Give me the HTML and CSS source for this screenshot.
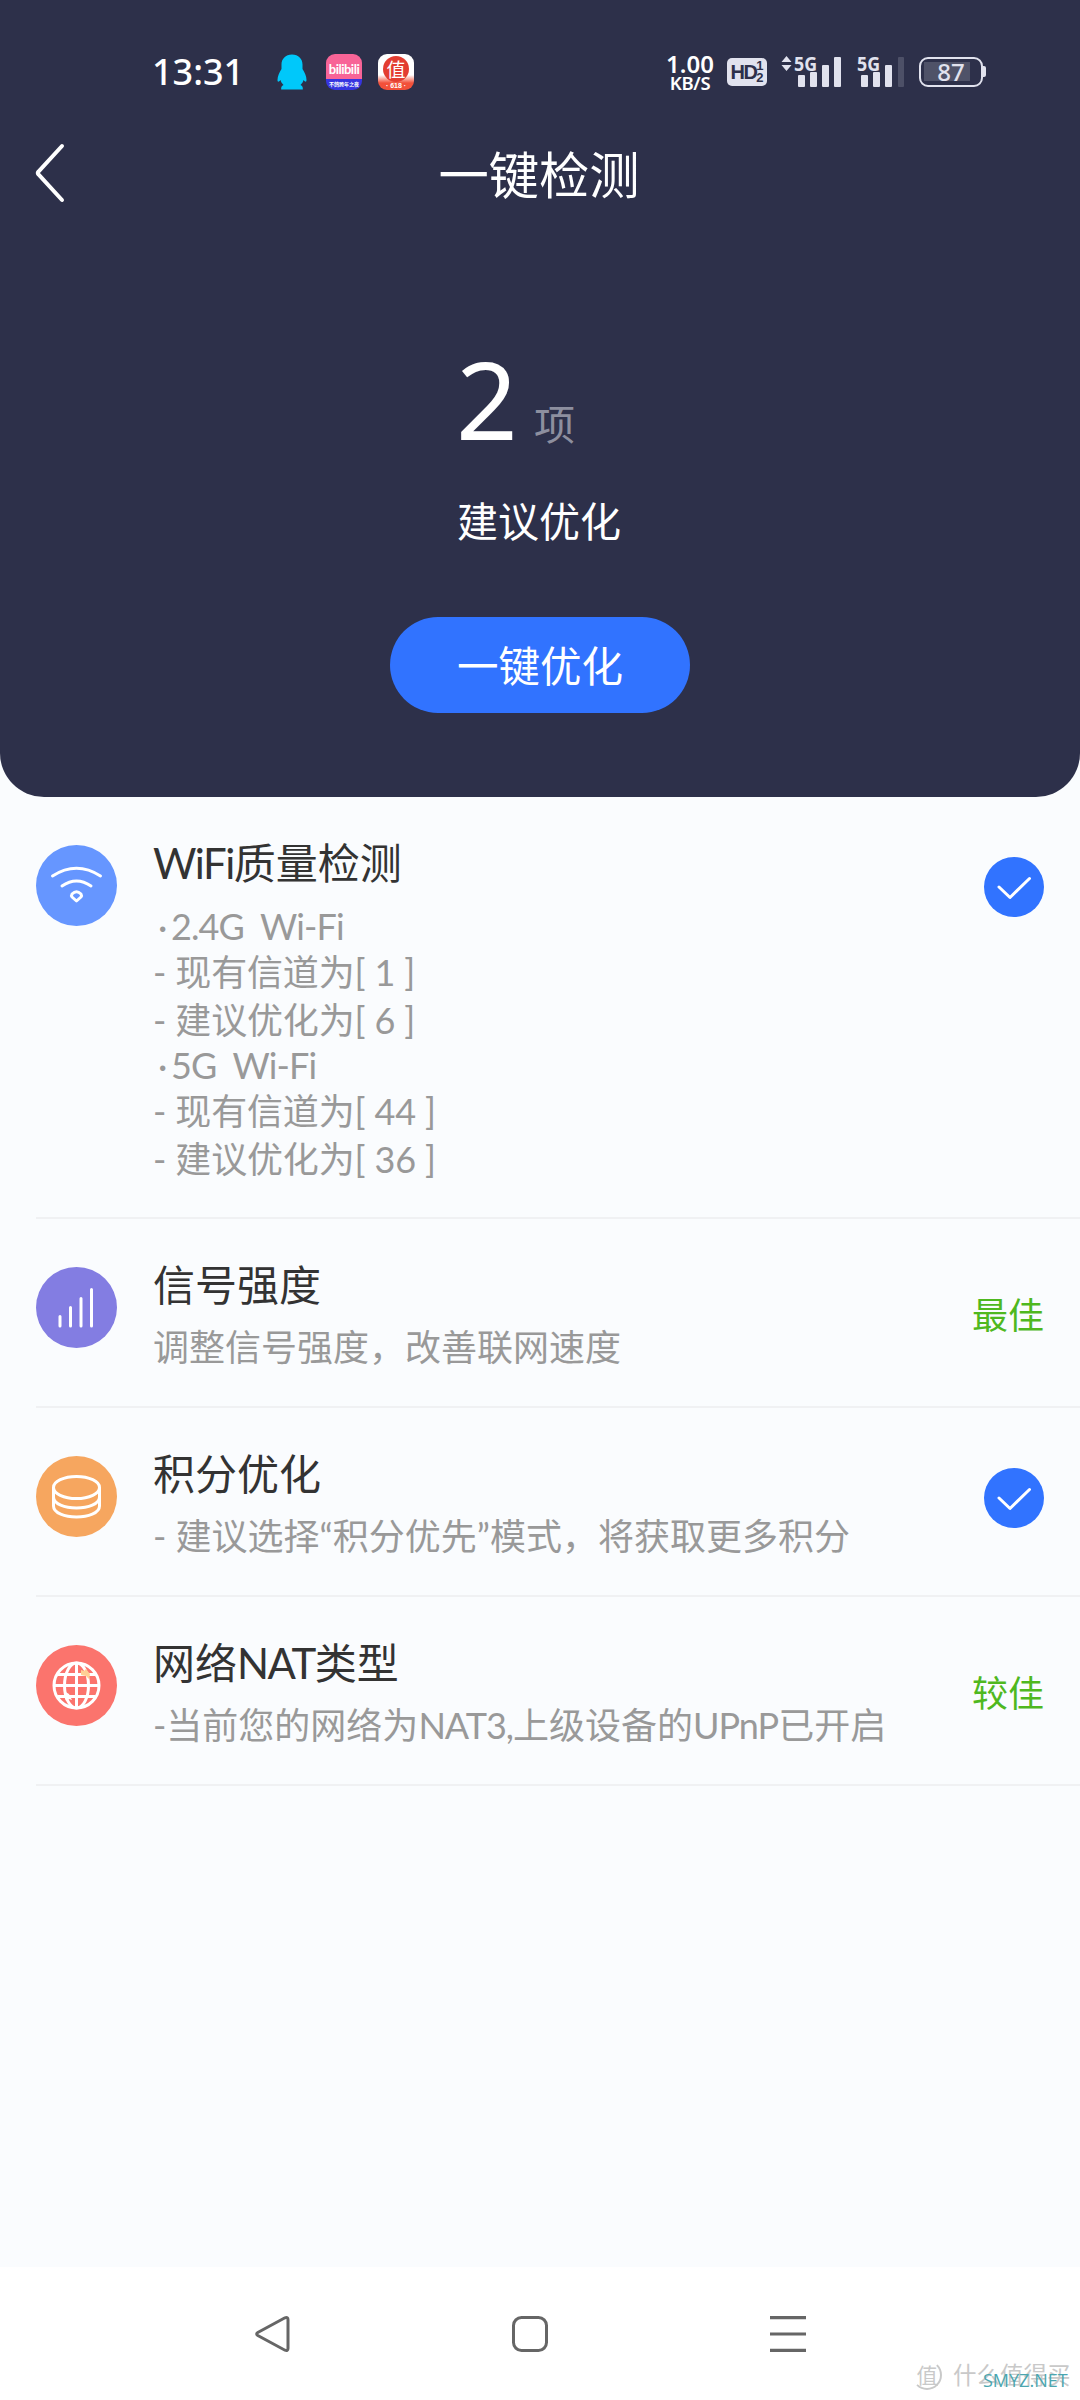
FILE: index.html
```html
<!DOCTYPE html>
<html lang="zh-CN">
<head>
<meta charset="utf-8">
<title>一键检测</title>
<link rel="stylesheet" href="styles.css">
</head>
<body>
<div class="screen">
  <header class="hero">
    <div class="status">
      <span class="clock">13:31</span>
      <svg class="qq" width="30" height="36" viewBox="0 0 30 36"><path d="M15 .5C8.500 .5 4.500 5 4.500 10.500V15C2.500 18 .5 22 .5 26c0 2 1 2.500 3 0 .5 2 1.500 3.500 3 5-2 1-2.500 2-2.300 4.500H25.800c.2-2.500-.3-3.500-2.300-4.500 1.500-1.500 2.500-3 3-5 2 2.500 3 2 3 0 0-4-2-8-4-11v-4.500C25.500 5 21.500.5 15 .5Z" fill="#00c8fa"/></svg>
      <span class="app bili"><b>bilibili</b><i>不鸽跨年之夜</i></span>
      <span class="app zhi"><b>值</b><i>· 618 ·</i></span>
      <span class="rate"><b>1.00</b><i>KB/S</i></span>
      <span class="hd"><b>HD</b><i><u>1</u><u>2</u></i></span>
      <svg class="sig1" width="62" height="42" viewBox="0 -8 62 42" fill="#e1e2ee"><path d="M6.500 1l5 6h-10zM6.500 16l5-6h-10z"/><rect x="18" y="20" width="7" height="12" rx="1"/><rect x="30" y="17" width="7" height="15" rx="1"/><rect x="42" y="10" width="7" height="22" rx="1"/><rect x="54" y="2" width="7" height="30" rx="1"/><text class="g5" x="14" y="15.500" textLength="23" lengthAdjust="spacingAndGlyphs">5G</text></svg>
      <svg class="sig2" width="48" height="42" viewBox="0 -8 48 42" fill="#e1e2ee"><rect x="4" y="20" width="7" height="12" rx="1"/><rect x="16" y="17" width="7" height="15" rx="1"/><rect x="28" y="10" width="7" height="22" rx="1"/><rect x="41" y="2" width="6" height="30" rx="1" opacity=".18"/><text class="g5" x="0" y="15.500" textLength="23" lengthAdjust="spacingAndGlyphs">5G</text></svg>
      <span class="battery">87</span>
    </div>
    <div class="titlebar">
      <svg class="back" width="32" height="60" viewBox="0 0 32 60"><path d="M28 3 4.500 28.500q-1.500 1.500 0 3L28 57" fill="none" stroke="#fff" stroke-width="4" stroke-linecap="round"/></svg>
      <h1>一键检测</h1>
    </div>
    <div class="count"><b>2</b><span>项</span></div>
    <p class="advice">建议优化</p>
    <button class="fix">一键优化</button>
  </header>

  <main class="list">
    <section class="item wifi">
      <svg class="icon" width="81" height="81" viewBox="0 0 81 81"><circle cx="40.500" cy="40.500" r="40.500" fill="#6696ff"/><g fill="none" stroke="#fff" stroke-width="3" stroke-linecap="round" stroke-linejoin="round"><path d="M16.500 31q24-15.500 48 0M26 41q14.500-10 29 0"/><path d="M36 49q4.500-4.500 9 0 1 1.500 0 3L40.500 56 36 52q-1-1.500 0-3Z"/></g></svg>
      <div class="body">
        <h2><span class="latin">WiFi</span>质量检测</h2>
        <div class="desc">
          <p class="band"><i>·</i>2.4G&nbsp; Wi-Fi</p>
          <p>- 现有信道为[ 1 ]</p>
          <p>- 建议优化为[ 6 ]</p>
          <p class="band"><i>·</i>5G&nbsp; Wi-Fi</p>
          <p>- 现有信道为[ 44 ]</p>
          <p>- 建议优化为[ 36 ]</p>
        </div>
      </div>
      <svg class="check" width="60" height="60" viewBox="0 0 60 60"><circle cx="30" cy="30" r="30" fill="#3173ff"/><path d="M15 30 26 40.500 45.500 21.500" fill="none" stroke="#fff" stroke-width="3" stroke-linecap="round" stroke-linejoin="round"/></svg>
    </section>
    <section class="item">
      <svg class="icon" width="81" height="81" viewBox="0 0 81 81"><circle cx="40.500" cy="40.500" r="40.500" fill="#837de2"/><path d="M24 49.500V59M34.500 40.500V59M45 31.500V59M55.500 22.500V59" stroke="#fff" stroke-width="3" stroke-linecap="round"/></svg>
      <div class="body"><h2>信号强度</h2><p>调整信号强度，改善联网速度</p></div>
      <span class="state">最佳</span>
    </section>
    <section class="item">
      <svg class="icon" width="81" height="81" viewBox="0 0 81 81"><circle cx="40.500" cy="40.500" r="40.500" fill="#f6a65f"/><g fill="none" stroke="#fff" stroke-width="3"><ellipse cx="40.500" cy="31.500" rx="23" ry="11"/><path d="M17.500 31.500V50c0 14.500 46 14.500 46 0V31.500M17.500 41c0 14.500 46 14.500 46 0"/></g></svg>
      <div class="body"><h2>积分优化</h2><p>- 建议选择“积分优先”模式，将获取更多积分</p></div>
      <svg class="check" width="60" height="60" viewBox="0 0 60 60"><circle cx="30" cy="30" r="30" fill="#3173ff"/><path d="M15 30 26 40.500 45.500 21.500" fill="none" stroke="#fff" stroke-width="3" stroke-linecap="round" stroke-linejoin="round"/></svg>
    </section>
    <section class="item nat">
      <svg class="icon" width="81" height="81" viewBox="0 0 81 81"><circle cx="40.500" cy="40.500" r="40.500" fill="#fb746d"/><g fill="none" stroke="#fff" stroke-width="3"><circle cx="40.500" cy="40.500" r="22.500"/><ellipse cx="40.500" cy="40.500" rx="12" ry="22.500"/><path d="M40.500 18v45M18 40.500h45M22 29.500h37M22 51.500h37"/></g><path d="M45 25l3 1 2-2 4 5-1 5-3-3-5-1z" fill="#ffcf95"/><path d="M28 46l5 3 3 6-3-1-3 2-2-5z" fill="#fff"/></svg>
      <div class="body"><h2>网络<span class="latin">NAT</span>类型</h2><p>-当前您的网络为<span class="latin">NAT3,</span>上级设备的<span class="latin">UPnP</span>已开启</p></div>
      <span class="state">较佳</span>
    </section>
  </main>

  <nav class="nav">
    <svg width="36" height="40" viewBox="0 0 36 40"><path d="M31 3.800 3.800 18.500q-2.300 1.500 0 3L31 36.200q3 1 3-2V5.800q0-3-3-2Z" fill="none" stroke="#666" stroke-width="3"/></svg>
    <svg width="36" height="36" viewBox="0 0 36 36"><rect x="1.500" y="1.500" width="33" height="33" rx="8" fill="none" stroke="#666" stroke-width="3"/></svg>
    <svg width="36" height="36" viewBox="0 0 36 36"><path d="M0 1.700h36M0 18h36M0 34.300h36" stroke="#666" stroke-width="3.200"/></svg>
    <div class="mark"><span class="seal">值</span><span class="site">什么值得买</span><span class="net">SMYZ.NET</span></div>
  </nav>
</div>
</body>
</html>
```
FILE: styles.css
```css
* { box-sizing: border-box; margin: 0; padding: 0; }
body { font-family: Lato, "Noto Sans CJK SC", sans-serif; }
i, u { font-style: normal; text-decoration: none; }
h1, h2 { font-weight: 400; }
.screen { width: 1080px; height: 2400px; display: flex; flex-direction: column; background: #fafcfe; }

.hero { height: 797px; flex: none; display: flex; flex-direction: column; align-items: center; background: #2d304a; color: #fff; border-radius: 0 0 44px 44px; }
.status { align-self: stretch; height: 144px; padding-left: 152px; display: flex; align-items: center; }
.clock { width: 125px; font: 500 36px/44px "Noto Sans", sans-serif; }
.qq { margin-right: 19px; }
.app { width: 36px; height: 36px; border-radius: 9px; overflow: hidden; display: flex; flex-direction: column; align-items: center; text-align: center; white-space: nowrap; }
.bili { margin-right: 16px; background: linear-gradient(#f86497 0 25px, #3634e0 25px); }
.bili b { font: 700 13px/30px Lato, sans-serif; height: 25px; letter-spacing: -.5px; }
.bili i { font: 700 5px/9px "Noto Sans CJK SC", sans-serif; }
.zhi { background: linear-gradient(#fff 0 21px, #f2503a 29px); }
.zhi b { width: 26px; height: 26px; margin-top: 2px; border-radius: 50%; background: #e33d31; font: 400 19px/25px "Noto Sans CJK SC", sans-serif; }
.zhi i { font: 700 7px/7px "Liberation Sans", sans-serif; }
.rate { width: 48px; margin-left: 252px; display: flex; flex-direction: column; align-items: center; }
.rate b { font: 600 24px/21px "Noto Sans", sans-serif; }
.rate i { font: 600 18.500px/18px "Noto Sans", sans-serif; letter-spacing: -.3px; }
.hd { width: 40px; height: 28px; margin-left: 13px; border-radius: 5px; background: #e1e2ee; color: #2d304a; display: flex; justify-content: center; align-items: center; }
.hd b { font: 700 20px/28px "Liberation Sans Narrow", "Liberation Sans", sans-serif; letter-spacing: -1.500px; }
.hd i { display: flex; flex-direction: column; font: 700 13px/12px "Liberation Sans", sans-serif; }
.sig1 { margin-left: 13px; }
.sig2 { margin-left: 15px; }
.sig1, .sig2 { margin-top: -8px; }
.g5 { font: 700 20px "Noto Sans", sans-serif; }
.battery { position: relative; width: 64px; height: 30px; margin-left: 14px; border: 2.500px solid #e1e2ee; border-radius: 9px; text-align: center; color: #e1e2ee; font: 500 24px/25px "Noto Sans", sans-serif; background: linear-gradient(#4f5268, #4f5268) 3px 3px / 46px 19px no-repeat; }
.battery::after { content: ""; position: absolute; left: 62px; top: 7px; width: 3px; height: 11px; background: #e1e2ee; border-radius: 0 2px 2px 0; }
.titlebar { align-self: stretch; height: 64px; display: grid; grid-template-columns: 76px 1fr 76px; align-items: center; }
.back { margin-left: 34px; margin-top: -6px; }
h1 { margin: -3px 0 0 -2px; font-size: 50.300px; line-height: 64px; text-align: center; }
.count { height: 240px; padding: 131px 49px 0 0; display: flex; align-items: baseline; gap: 18px; }
.count b { font: 400 108px/120px "Noto Sans", sans-serif; letter-spacing: -2px; }
.count span { font-size: 41px; color: #8d8f9f; }
.advice { margin: 44px 2px 0 0; font-size: 41px; line-height: 60px; }
.fix { width: 300px; height: 96px; margin-top: 65px; border: 0; border-radius: 48px; background: #3173ff; color: #fff; font: 41.500px/98px Lato, "Noto Sans CJK SC", sans-serif; }

.list { flex: 1; padding-left: 36px; display: flex; flex-direction: column; }
.item { height: 189px; padding-right: 36px; border-bottom: 2px solid #f0f1f3; display: flex; align-items: flex-start; }
.icon { flex: none; margin-top: 48px; }
.wifi { height: 422px; }
.body { flex: 1; margin-left: 36px; padding-top: 36px; color: #999; font-size: 36px; line-height: 48px; white-space: nowrap; }
.item h2 { font-size: 42px; line-height: 60px; margin-bottom: 8px; color: #333; }
.latin { letter-spacing: -1px; }
h2 .latin { letter-spacing: -1.500px; }
.desc { display: flex; flex-direction: column; padding-top: 4px; }
.desc p { letter-spacing: -.15px; }
.desc .band { line-height: 43px; letter-spacing: -.9px; }
.desc .band i { display: inline-block; width: 18px; padding-left: 5px; }
.check { margin-top: 60px; flex: none; }
.state { margin-top: 69px; font-size: 36px; line-height: 54px; color: #4fb81f; }

.nav { position: relative; height: 133px; flex: none; padding: 0 274px 0 254px; display: flex; justify-content: space-between; align-items: center; background: #fff; }
.mark { position: absolute; left: 912px; top: 93px; display: flex; align-items: center; gap: 11px; color: #c9c9c9; }
.seal { width: 30px; height: 30px; border: 2px solid #c9c9c9; border-left-color: transparent; border-top-color: transparent; border-radius: 50%; font-size: 21px; line-height: 25px; text-align: center; }
.site { font-size: 23.500px; line-height: 30px; }
.net { position: absolute; left: 71px; top: 8px; font: 400 18px/24px "Open Sans", sans-serif; color: #4ba6b0; }
```
